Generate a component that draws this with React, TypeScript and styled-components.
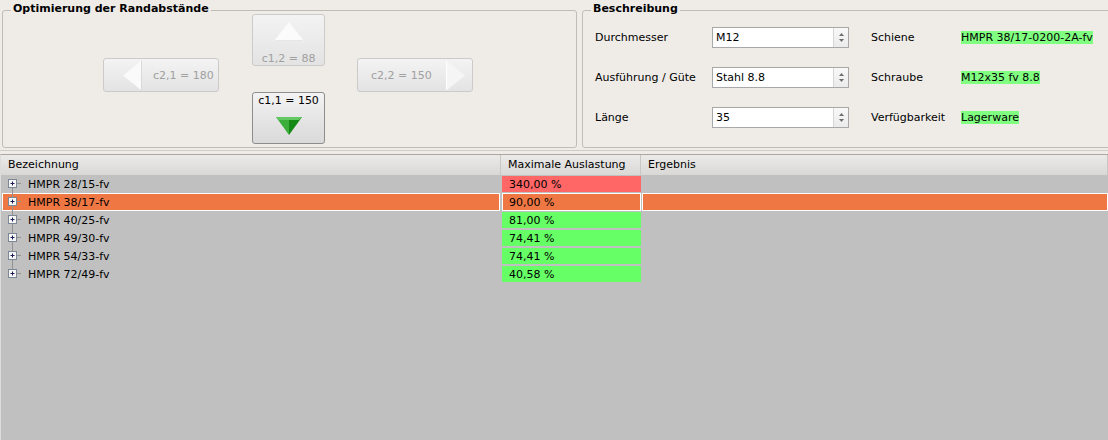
import React from "react";
import styled, { createGlobalStyle, css } from "styled-components";

const GlobalStyle = createGlobalStyle`
  html, body {
    margin: 0;
    padding: 0;
  }
  body {
    background: #efece8;
    font-family: "DejaVu Sans", Verdana, sans-serif;
    font-size: 11px;
    color: #000;
  }
  #root {
    width: 1108px;
    height: 440px;
    overflow: hidden;
  }
`;

const ORANGE = "#ef7744";

interface Row {
  name: string;
  load: string;
  status: "bad" | "ok";
  selected?: boolean;
}

const rows: Row[] = [
  { name: "HMPR 28/15-fv", load: "340,00 %", status: "bad" },
  { name: "HMPR 38/17-fv", load: "90,00 %", status: "ok", selected: true },
  { name: "HMPR 40/25-fv", load: "81,00 %", status: "ok" },
  { name: "HMPR 49/30-fv", load: "74,41 %", status: "ok" },
  { name: "HMPR 54/33-fv", load: "74,41 %", status: "ok" },
  { name: "HMPR 72/49-fv", load: "40,58 %", status: "ok" },
];

const UpArrow = () => (
  <svg width="30" height="19" viewBox="0 0 30 19">
    <polygon points="15,0 30,19 0,19" fill="#fbfbfb" />
    <line x1="1" y1="18.5" x2="29" y2="18.5" stroke="#e6e6e6" />
  </svg>
);

const LeftArrow = () => (
  <svg width="19" height="29" viewBox="0 0 19 29">
    <polygon points="0,14.5 18,0 18,29" fill="#fafafa" />
    <line x1="18.5" y1="0" x2="18.5" y2="29" stroke="#d9d9d9" />
  </svg>
);

const RightArrow = () => (
  <svg width="19" height="29" viewBox="0 0 19 29">
    <polygon points="1,0 19,14.5 1,29" fill="#f5f5f5" />
    <line x1="0.5" y1="0" x2="0.5" y2="29" stroke="#ffffff" />
  </svg>
);

const GreenDown = () => (
  <svg width="26" height="18" viewBox="0 0 26 18">
    <polygon points="0,0 13,0 13,18" fill="#3aad3a" />
    <polygon points="13,0 26,0 13,18" fill="#158915" />
    <polygon points="0,0 26,0 23,3 3,3" fill="#62c862" />
  </svg>
);

const SpinArrows = () => (
  <>
    <svg width="5" height="3" viewBox="0 0 5 3">
      <polygon points="2.5,0 5,3 0,3" fill="#6e6e6e" />
    </svg>
    <svg width="5" height="3" viewBox="0 0 5 3">
      <polygon points="0,0 5,0 2.5,3" fill="#6e6e6e" />
    </svg>
  </>
);

const Branch: React.FC<{ first: boolean; last: boolean }> = ({ first, last }) => (
  <svg width="22" height="18" viewBox="0 0 22 18">
    <line x1="10.5" y1={first ? 9 : 0} x2="10.5" y2={last ? 9 : 18} stroke="#939393" />
    <line x1="14.5" y1="8.5" x2="19" y2="8.5" stroke="#939393" />
    <rect x="6.5" y="4.5" width="8" height="8" fill="#f6f6f6" stroke="#7c8796" />
    <line x1="8.5" y1="8.5" x2="12.5" y2="8.5" stroke="#1c1c5c" />
    <line x1="10.5" y1="6.5" x2="10.5" y2="10.5" stroke="#1c1c5c" />
  </svg>
);

export default function App() {
  return (
    <Window>
      <GlobalStyle />
      <TopRow>
        <GroupBox $width={575}>
          <GroupTitle>Optimierung der Randabstände</GroupTitle>
          <Cluster>
            <HButton disabled $side="left">
              <LeftArrow />
              <span>c2,1 = 180</span>
            </HButton>
            <CenterColumn>
              <VButton disabled>
                <UpArrow />
                <VLabel>c1,2 = 88</VLabel>
              </VButton>
              <VButton $enabled>
                <VLabel>c1,1 = 150</VLabel>
                <GreenDown />
              </VButton>
            </CenterColumn>
            <HButton disabled $side="right">
              <span>c2,2 = 150</span>
              <RightArrow />
            </HButton>
          </Cluster>
        </GroupBox>
        <GroupBox $width={530}>
          <GroupTitle>Beschreibung</GroupTitle>
          <DescGrid>
            <FieldLabel>Durchmesser</FieldLabel>
            <SpinBox>
              <SpinText>M12</SpinText>
              <SpinButtons>
                <SpinArrows />
              </SpinButtons>
            </SpinBox>
            <FieldLabel>Schiene</FieldLabel>
            <Value>
              <Highlight>HMPR 38/17-0200-2A-fv</Highlight>
            </Value>

            <FieldLabel>Ausführung / Güte</FieldLabel>
            <SpinBox>
              <SpinText>Stahl 8.8</SpinText>
              <SpinButtons>
                <SpinArrows />
              </SpinButtons>
            </SpinBox>
            <FieldLabel>Schraube</FieldLabel>
            <Value>
              <Highlight>M12x35 fv 8.8</Highlight>
            </Value>

            <FieldLabel>Länge</FieldLabel>
            <SpinBox>
              <SpinText>35</SpinText>
              <SpinButtons>
                <SpinArrows />
              </SpinButtons>
            </SpinBox>
            <FieldLabel>Verfügbarkeit</FieldLabel>
            <Value>
              <Highlight>Lagerware</Highlight>
            </Value>
          </DescGrid>
        </GroupBox>
      </TopRow>
      <Divider />
      <Tree>
        <HeaderRow>
          <HeaderCell>Bezeichnung</HeaderCell>
          <HeaderCell>Maximale Auslastung</HeaderCell>
          <HeaderCell>Ergebnis</HeaderCell>
        </HeaderRow>
        {rows.map((r, i) => (
          <TreeRow key={r.name}>
            <NameCell $selected={r.selected}>
              <Branch first={i === 0} last={i === rows.length - 1} />
              <span>{r.name}</span>
            </NameCell>
            <LoadCell $selected={r.selected} $status={r.status}>
              {r.load}
            </LoadCell>
            <ResultCell $selected={r.selected} />
          </TreeRow>
        ))}
      </Tree>
    </Window>
  );
}

const Window = styled.div`
  display: flex;
  flex-direction: column;
  height: 440px;
`;

const TopRow = styled.div`
  display: flex;
  gap: 5px;
  padding: 10px 0 0 2px;
  height: 148px;
  box-sizing: border-box;
  flex: 0 0 auto;
`;

const GroupBox = styled.div<{ $width: number }>`
  position: relative;
  flex: 0 0 ${(p) => p.$width}px;
  box-sizing: border-box;
  border: 1px solid #c0bcb7;
  border-radius: 3px;
`;

const GroupTitle = styled.div`
  position: absolute;
  top: -9px;
  left: 8px;
  padding: 0 2px;
  background: #efece8;
  font-weight: bold;
  line-height: 14px;
`;

const Cluster = styled.div`
  display: flex;
  align-items: flex-start;
  padding: 3px 0 0 100px;
`;

const CenterColumn = styled.div`
  display: flex;
  flex-direction: column;
  gap: 26px;
  margin: 0 32px 0 33px;
`;

const buttonBase = css<{ $enabled?: boolean }>`
  box-sizing: border-box;
  padding: 0;
  font-family: inherit;
  font-size: 11px;
  border-radius: 3px;
  border: 1px solid ${(p) => (p.$enabled ? "#8d8d8d" : "#cbcbcb")};
  background: ${(p) =>
    p.$enabled
      ? "linear-gradient(#f3f3f3, #d9d9d9)"
      : "linear-gradient(#f3f3f3, #e3e3e3)"};
  color: ${(p) => (p.$enabled ? "#000" : "#a0a0a0")};
`;

const VButton = styled.button<{ $enabled?: boolean }>`
  ${buttonBase};
  width: 73px;
  height: 52px;
  display: flex;
  flex-direction: column;
  align-items: center;
  justify-content: ${(p) => (p.$enabled ? "flex-start" : "space-between")};
  padding: ${(p) => (p.$enabled ? "1px 0 0" : "7px 0 0")};

  svg {
    margin-top: ${(p) => (p.$enabled ? "10px" : "0")};
  }
`;

const VLabel = styled.span`
  line-height: 13px;
`;

const HButton = styled.button<{ $side: "left" | "right"; $enabled?: boolean }>`
  ${buttonBase};
  width: 116px;
  height: 34px;
  margin-top: 44px;
  display: flex;
  align-items: center;
  padding-left: ${(p) => (p.$side === "left" ? "19px" : "13px")};

  span {
    margin-left: ${(p) => (p.$side === "left" ? "11px" : "0")};
  }
  svg {
    margin-left: ${(p) => (p.$side === "right" ? "14px" : "0")};
  }
`;

const DescGrid = styled.div`
  display: grid;
  grid-template-columns: 117px 159px 90px 1fr;
  grid-auto-rows: 21px;
  row-gap: 19px;
  align-items: center;
  padding: 16px 0 0 12px;
`;

const FieldLabel = styled.div`
  line-height: 14px;
`;

const SpinBox = styled.div`
  width: 137px;
  height: 21px;
  box-sizing: border-box;
  border: 1px solid #a8a8a8;
  background: #fff;
  display: flex;
`;

const SpinText = styled.span`
  flex: 1;
  padding-left: 3px;
  line-height: 19px;
`;

const SpinButtons = styled.div`
  width: 14px;
  border-left: 1px solid #d6d6d6;
  background: linear-gradient(#f8f8f8, #ebebeb);
  display: flex;
  flex-direction: column;
  align-items: center;
  justify-content: center;
  gap: 3px;
`;

const Value = styled.div`
  line-height: 14px;
`;

const Highlight = styled.span`
  background: #80ff80;
`;

const Divider = styled.div`
  height: 1px;
  background: #cfcbc6;
  margin: 2px 0 3px;
  flex: 0 0 auto;
`;

const Tree = styled.div`
  flex: 1;
  background: #c0c0c0;
  border-top: 1px solid #aaa7a2;
  border-left: 1px solid #dcdcdc;
`;

const columns = css`
  display: grid;
  grid-template-columns: 500px 140px 1fr;
`;

const HeaderRow = styled.div`
  ${columns};
  height: 20px;
  background: linear-gradient(#ebeae8, #dad8d5);
`;

const HeaderCell = styled.div`
  padding-left: 7px;
  line-height: 20px;
  border-right: 1px solid #c9c7c4;
`;

const TreeRow = styled.div`
  ${columns};
  height: 18px;
`;

const selectedCell = css`
  background: ${ORANGE};
  box-shadow: inset 0 0 0 1px #fff;
`;

const NameCell = styled.div<{ $selected?: boolean }>`
  display: flex;
  align-items: center;
  gap: 4px;
  margin: 0 ${(p) => (p.$selected ? "1px" : "0")} 0 1px;
  ${(p) => p.$selected && selectedCell};
`;

const LoadCell = styled.div<{ $selected?: boolean; $status: "bad" | "ok" }>`
  margin: ${(p) => (p.$selected ? "0 0 0 1px" : "1px 0 1px 1px")};
  padding-left: 7px;
  display: flex;
  align-items: center;
  background: ${(p) => (p.$status === "bad" ? "#ff6666" : "#66ff66")};
  ${(p) => p.$selected && selectedCell};
`;

const ResultCell = styled.div<{ $selected?: boolean }>`
  margin-left: 1px;
  ${(p) => p.$selected && selectedCell};
`;
